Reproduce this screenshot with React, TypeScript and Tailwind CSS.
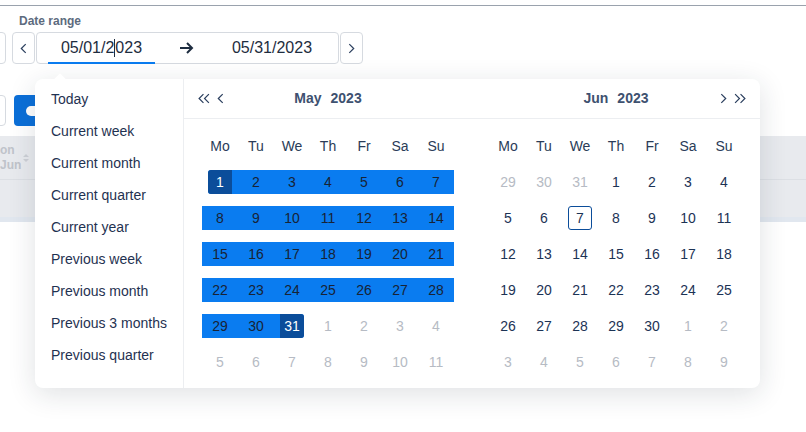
import React from "react";

type Cell = { d: number; out?: boolean; range?: "start" | "mid" | "end"; today?: boolean };

const WEEK = ["Mo", "Tu", "We", "Th", "Fr", "Sa", "Su"];

const PRESETS = [
  "Today",
  "Current week",
  "Current month",
  "Current quarter",
  "Current year",
  "Previous week",
  "Previous month",
  "Previous 3 months",
  "Previous quarter",
];

function buildMay(): Cell[] {
  const cells: Cell[] = [];
  for (let d = 1; d <= 31; d++) {
    cells.push({ d, range: d === 1 ? "start" : d === 31 ? "end" : "mid" });
  }
  for (let d = 1; d <= 11; d++) cells.push({ d, out: true });
  return cells;
}

function buildJun(): Cell[] {
  const cells: Cell[] = [29, 30, 31].map((d) => ({ d, out: true }));
  for (let d = 1; d <= 30; d++) cells.push({ d, today: d === 7 });
  for (let d = 1; d <= 9; d++) cells.push({ d, out: true });
  return cells;
}

function Chevron({ dir, double }: { dir: "left" | "right"; double?: boolean }) {
  const one = dir === "left" ? "M5 1 L1 5 L5 9" : "M1 1 L5 5 L1 9";
  const two = dir === "left" ? "M10 1 L6 5 L10 9" : "M6 1 L10 5 L6 9";
  return (
    <svg width={double ? 12 : 7} height="11" viewBox={double ? "0 0 11 10" : "0 0 6 10"} fill="none" stroke="#2b3f5e" strokeWidth="1.1">
      <path d={one} />
      {double && <path d={two} />}
    </svg>
  );
}

function DayCell({ c }: { c: Cell }) {
  if (c.range === "mid") {
    return (
      <div className="h-9 flex items-center">
        <div className="h-6 w-full bg-[#0a7cf0] flex items-center justify-center text-[#182335]">{c.d}</div>
      </div>
    );
  }
  if (c.range === "start") {
    return (
      <div className="h-9 flex items-center pl-[6px]">
        <div className="h-6 w-full bg-[#0a7cf0] flex rounded-l-[3px]">
          <div className="h-6 w-6 bg-[#0b4d9a] rounded-l-[3px] text-white flex items-center justify-center">{c.d}</div>
        </div>
      </div>
    );
  }
  if (c.range === "end") {
    return (
      <div className="h-9 flex items-center pr-[6px]">
        <div className="h-6 w-full bg-[#0a7cf0] flex justify-end rounded-r-[3px]">
          <div className="h-6 w-6 bg-[#0b4d9a] rounded-r-[3px] text-white flex items-center justify-center">{c.d}</div>
        </div>
      </div>
    );
  }
  return (
    <div className="h-9 flex items-center justify-center">
      <div
        className={
          "h-6 w-6 flex items-center justify-center rounded-[3px] " +
          (c.out ? "text-[#b6bbc4]" : "text-[#1c3355]") +
          (c.today ? " border border-[#0b4d9a]" : "")
        }
      >
        {c.d}
      </div>
    </div>
  );
}

function Month({ cells }: { cells: Cell[] }) {
  return (
    <div className="w-[252px] shrink-0 grid grid-cols-7 text-[14px]">
      {WEEK.map((w) => (
        <div key={w} className="h-9 flex items-center justify-center text-[#2a3c58]">
          {w}
        </div>
      ))}
      {cells.map((c, i) => (
        <DayCell key={i} c={c} />
      ))}
    </div>
  );
}

function MonthTitle({ month }: { month: string }) {
  return (
    <div className="flex justify-center gap-[9px] text-[14px] font-bold text-[#3e5170]">
      <span>{month}</span>
      <span>2023</span>
    </div>
  );
}

export default function App() {
  return (
    <div
      className="relative w-[806px] h-[432px] overflow-hidden bg-white"
      style={{ fontFamily: '"Liberation Sans", Arial, sans-serif' }}
    >
      <div className="h-[5px]" />
      <div className="border-t border-[#9aa2ad]" />

      {/* date range control */}
      <div className="pt-[8px] pl-[19px] text-[12px] font-bold text-[#5d6b7e] leading-[14px]">Date range</div>
      <div className="mt-[4px] flex items-center h-8">
        <div className="w-[26px] h-8 -ml-5 border border-[#d6dae0] rounded shrink-0" />
        <button className="ml-[6px] w-[23px] h-8 border border-[#d6dae0] rounded flex items-center justify-center shrink-0">
          <Chevron dir="left" />
        </button>
        <div className="ml-[1px] w-[303px] h-8 border border-[#d6dae0] rounded flex items-stretch px-[11px] text-[16px] text-[#1e2d40] shrink-0">
          <div className="w-[107px] relative flex items-center justify-center">
            <span>05/01/2</span>
            <span className="w-px h-[18px] bg-[#1e2d40]" />
            <span>023</span>
            <div className="absolute left-0 right-0 -bottom-px h-[2px] bg-[#0a7cf0]" />
          </div>
          <div className="w-[63px] flex items-center justify-center">
            <svg width="15" height="14" viewBox="0 0 15 14" fill="none" stroke="#1e2d40" strokeWidth="2">
              <path d="M1 7 H13 M8 2 L13 7 L8 12" />
            </svg>
          </div>
          <div className="w-[108px] flex items-center justify-center">05/31/2023</div>
        </div>
        <button className="ml-[1px] w-[23px] h-8 border border-[#d6dae0] rounded flex items-center justify-center shrink-0">
          <Chevron dir="right" />
        </button>
      </div>

      {/* underlying toolbar */}
      <div className="mt-[31px] flex items-center h-[31px]">
        <div className="w-[26px] h-[31px] -ml-5 border border-[#d6dae0] rounded" />
        <div className="w-2" />
        <div className="w-[120px] h-[31px] bg-[#0b6fd8] rounded flex items-center pl-[12px]">
          <div className="w-[14px] h-[10px] rounded-full bg-white" />
        </div>
      </div>

      {/* underlying table */}
      <div className="mt-[10px] bg-[#e8eaee]">
        <div className="h-[44px] border-b border-[#dcdfe4] flex items-center">
          <div className="text-[12px] font-bold text-[#bfc3ca] leading-[15px]">
            <div>on</div>
            <div>Jun</div>
          </div>
          <svg className="ml-[2px]" width="6" height="12" viewBox="0 0 6 12" fill="#cdd0d6">
            <path d="M0 5 L3 2 L6 5 Z M0 7 L3 10 L6 7 Z" />
          </svg>
        </div>
        <div className="h-[37px]" />
        <div className="h-[5px] bg-[#e1e7ef]" />
      </div>

      {/* popover */}
      <div className="absolute left-[35px] top-[79px] w-[725px] h-[309px] bg-white rounded-lg shadow-[0_6px_28px_rgba(30,40,60,0.14)] flex">
        <div className="absolute -top-[4px] left-[21px] w-2 h-2 bg-white rotate-45" />
        <div className="w-[149px] shrink-0 border-r border-[#eceef1] pt-[4px] text-[14px] text-[#1f3251] whitespace-nowrap">
          {PRESETS.map((p) => (
            <div key={p} className="h-8 flex items-center px-4">
              {p}
            </div>
          ))}
        </div>
        <div className="w-[576px] shrink-0 flex flex-col">
          <div className="h-10 border-b border-[#eceef1] flex items-center px-[18px] gap-9">
            <div className="w-[252px] grid grid-cols-[1fr_auto_1fr] items-center">
              <div className="flex items-center gap-[7px] -ml-[4px]">
                <Chevron dir="left" double />
                <Chevron dir="left" />
              </div>
              <MonthTitle month="May" />
              <div />
            </div>
            <div className="w-[252px] grid grid-cols-[1fr_auto_1fr] items-center">
              <div />
              <MonthTitle month="Jun" />
              <div className="flex items-center justify-end gap-[7px] -mr-[4px]">
                <Chevron dir="right" />
                <Chevron dir="right" double />
              </div>
            </div>
          </div>
          <div className="flex gap-9 pt-[9px] px-[18px]">
            <Month cells={buildMay()} />
            <Month cells={buildJun()} />
          </div>
        </div>
      </div>
    </div>
  );
}
